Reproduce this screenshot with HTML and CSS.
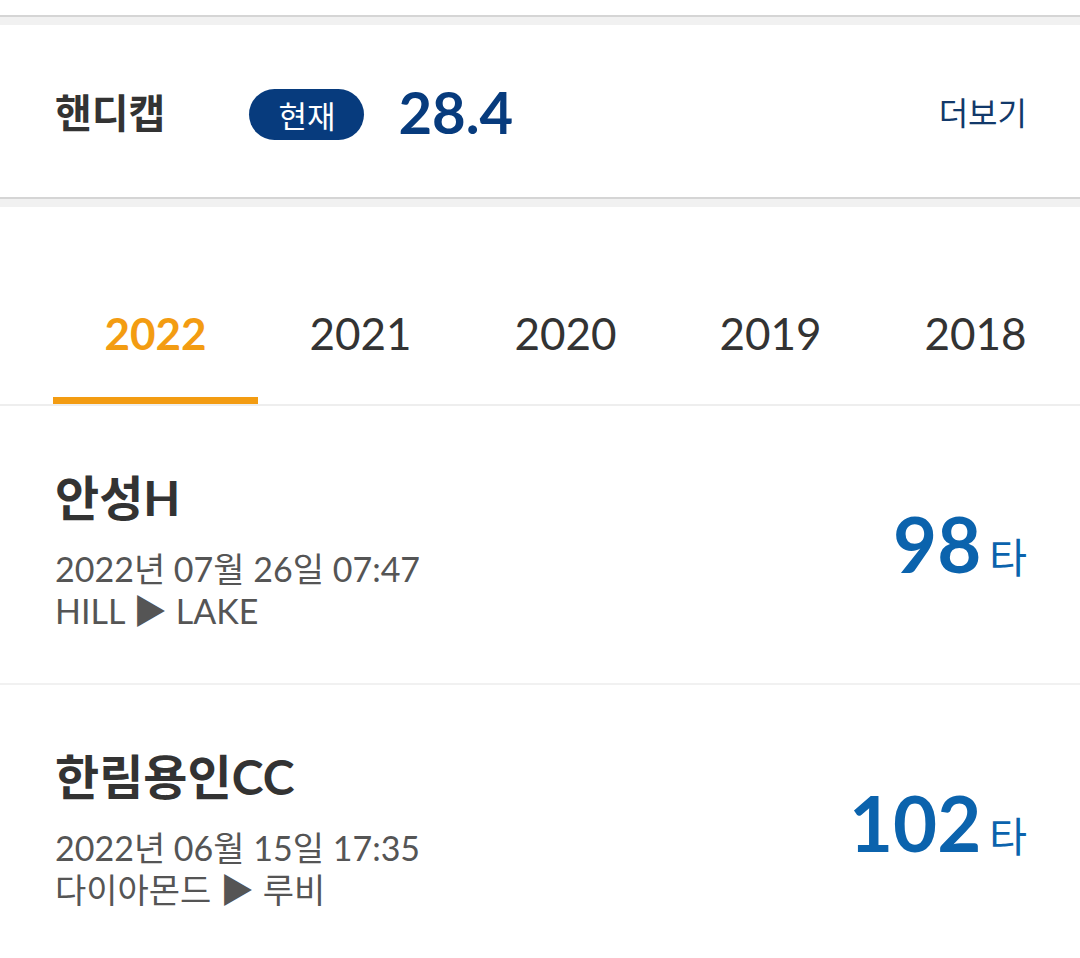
FILE: index.html
```html
<!DOCTYPE html>
<html lang="ko">
<head>
<meta charset="utf-8">
<title>핸디캡</title>
<link rel="stylesheet" href="styles.css">
</head>
<body>
<div class="prev"></div>
<div class="sep"></div>
<section class="handicap">
  <h2 class="hc-title">핸디캡</h2>
  <span class="pill">현재</span>
  <span class="hc-value">28.4</span>
  <a class="more" href="#">더보기</a>
</section>
<div class="sep"></div>
<nav class="tabs">
  <div class="tab active">2022</div>
  <div class="tab">2021</div>
  <div class="tab">2020</div>
  <div class="tab">2019</div>
  <div class="tab">2018</div>
</nav>
<ul class="rounds">
  <li class="round">
    <div class="info">
      <div class="course">안성H</div>
      <div class="date">2022년 07월 26일 07:47</div>
      <div class="route">HILL ▶ LAKE</div>
    </div>
    <div class="score"><span class="num">98</span><span class="unit">타</span></div>
  </li>
  <li class="round">
    <div class="info">
      <div class="course">한림용인CC</div>
      <div class="date">2022년 06월 15일 17:35</div>
      <div class="route">다이아몬드 ▶ 루비</div>
    </div>
    <div class="score"><span class="num">102</span><span class="unit">타</span></div>
  </li>
</ul>
</body>
</html>
```

FILE: styles.css
```css
* { box-sizing: border-box; }
html, body {
  margin: 0;
  padding: 0;
  background: #ffffff;
  width: 1080px;
  height: 958px;
  overflow: hidden;
  font-family: Lato, "Noto Sans CJK KR", "Noto Sans", sans-serif;
  color: #333333;
}
.prev { height: 15px; background: #ffffff; }
.sep {
  height: 10px;
  border-top: 2px solid #d5d5d5;
  background: #f1f1f1;
}
.handicap {
  height: 172px;
  display: flex;
  align-items: center;
  padding: 0 53px 0 55px;
  background: #ffffff;
}
.hc-title {
  margin: 0;
  font-size: 40px;
  font-weight: 700;
  color: #333333;
  line-height: 1;
  font-family: "Noto Sans CJK KR", sans-serif;
}
.pill {
  margin-left: 84px;
  height: 51px;
  width: 115px;
  border-radius: 26px;
  background: #073b7d;
  color: #ffffff;
  font-size: 31px;
  display: flex;
  align-items: center;
  justify-content: center;
  font-family: "Noto Sans CJK KR", sans-serif;
  line-height: 1;
  margin-top: 6px;
}
.hc-value {
  margin-left: 34px;
  font-size: 58px;
  font-weight: 700;
  color: #073b7d;
  line-height: 1;
  margin-top: 2px;
}
.more {
  margin-left: auto;
  font-size: 32px;
  color: #12396a;
  text-decoration: none;
  font-family: "Noto Sans CJK KR", sans-serif;
  line-height: 1;
}
.tabs {
  display: flex;
  padding-left: 53px;
  border-bottom: 2px solid #eeeeee;
  overflow: hidden;
}
.tab {
  flex: 0 0 205px;
  height: 197px;
  padding-top: 62px;
  border-bottom: 7px solid transparent;
  display: flex;
  align-items: center;
  justify-content: center;
  font-size: 44px;
  color: #333333;
}
.tab.active {
  color: #f39c12;
  font-weight: 700;
  border-bottom-color: #f39c12;
}
.rounds {
  list-style: none;
  margin: 0;
  padding: 0;
}
.round {
  height: 279px;
  border-bottom: 2px solid #f1f1f1;
  padding: 62px 53px 0 55px;
  display: flex;
  justify-content: space-between;
  align-items: flex-start;
}
.info { display: flex; flex-direction: column; }
.course {
  font-size: 48px;
  font-weight: 700;
  line-height: 60px;
  color: #333333;
  margin-bottom: 20px;
}
.date, .route {
  font-size: 34px;
  line-height: 42px;
  color: #555555;
}
.score {
  align-self: center;
  margin-top: -62px;
  display: flex;
  align-items: baseline;
  color: #0b63ad;
}
.num {
  font-size: 76px;
  font-weight: 700;
  line-height: 80px;
}
.unit {
  margin-left: 8px;
  font-size: 41px;
  font-family: "Noto Sans CJK KR", sans-serif;
}
```
